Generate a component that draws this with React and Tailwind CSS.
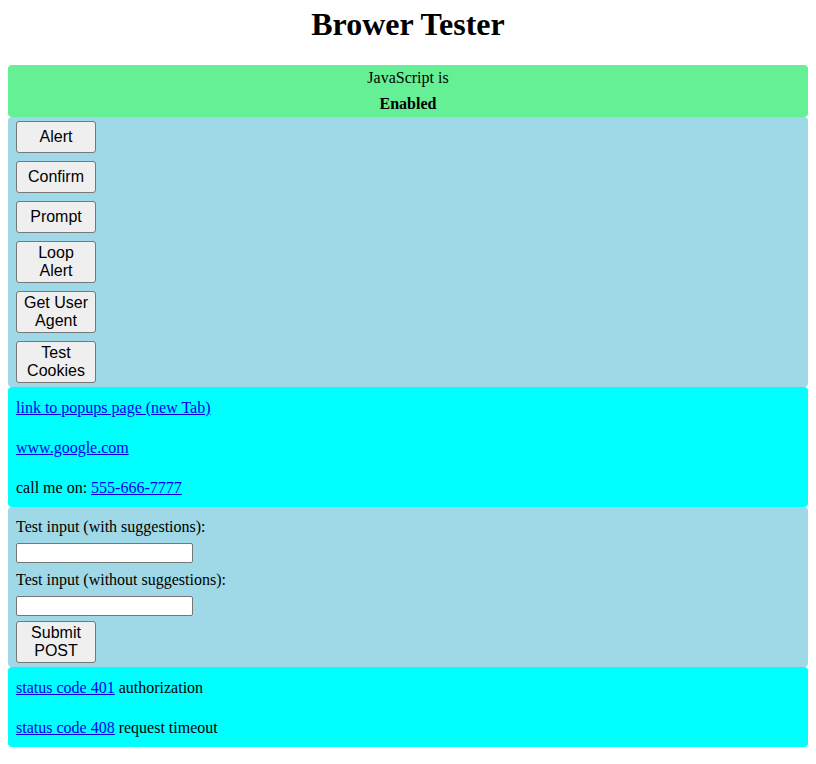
import React from "react";

const buttons = [
  { label: "Alert", tall: false },
  { label: "Confirm", tall: false },
  { label: "Prompt", tall: false },
  { label: "Loop Alert", tall: true },
  { label: "Get User Agent", tall: true },
  { label: "Test Cookies", tall: true },
];

const btnClass =
  "w-[80px] bg-[#efefef] border border-[#767676] rounded-[3px] text-[16px] leading-[18px] text-black text-center px-[6px] font-['Liberation_Sans',Arial,sans-serif]";

const App = () => {
  return (
    <div className="min-h-[764px] bg-white text-black text-[16px] font-['Liberation_Serif','Times_New_Roman',serif]">
      <h1 className="text-[32px] leading-[37px] font-bold text-center pt-[6px] mb-[22px]">
        Brower Tester
      </h1>

      <div className="mx-2">
        <div className="bg-[#66f096] rounded-[4px] text-center leading-[26px]">
          <div>JavaScript is</div>
          <div className="font-bold">Enabled</div>
        </div>

        <div className="bg-[#9fd8e6] rounded-[4px] px-2 py-1 flex flex-col gap-2">
          {buttons.map((b) => (
            <button
              key={b.label}
              type="button"
              className={`${btnClass} ${b.tall ? "h-[42px]" : "h-[32px]"}`}
            >
              {b.label}
            </button>
          ))}
        </div>

        <div className="bg-[#00ffff] rounded-[4px] px-2 pt-[9px] pb-[7px] flex flex-col gap-4 leading-6">
          <div>
            <a href="#" className="text-[#0000ee] underline">
              link to popups page (new Tab)
            </a>
          </div>
          <div>
            <a href="#" className="text-[#0000ee] underline">
              www.google.com
            </a>
          </div>
          <div>
            call me on:{" "}
            <a href="#" className="text-[#0000ee] underline">
              555-666-7777
            </a>
          </div>
        </div>

        <div className="bg-[#9fd8e6] rounded-[4px] px-2 pt-1 pb-1 flex flex-col items-start">
          <label className="leading-6 mt-1">Test input (with suggestions):</label>
          <input
            type="text"
            className="mt-1 w-[177px] h-[20px] bg-white border border-[#767676] rounded-[2px]"
          />
          <label className="leading-6 mt-[5px]">Test input (without suggestions):</label>
          <input
            type="text"
            className="mt-1 w-[177px] h-[20px] bg-white border border-[#767676] rounded-[2px]"
          />
          <button type="button" className={`${btnClass} h-[42px] mt-[5px]`}>
            Submit POST
          </button>
        </div>

        <div className="bg-[#00ffff] rounded-[4px] px-2 pt-[9px] pb-[7px] flex flex-col gap-4 leading-6">
          <div>
            <a href="#" className="text-[#0000ee] underline">
              status code 401
            </a>{" "}
            authorization
          </div>
          <div>
            <a href="#" className="text-[#0000ee] underline">
              status code 408
            </a>{" "}
            request timeout
          </div>
        </div>
      </div>
    </div>
  );
};

export default App;
